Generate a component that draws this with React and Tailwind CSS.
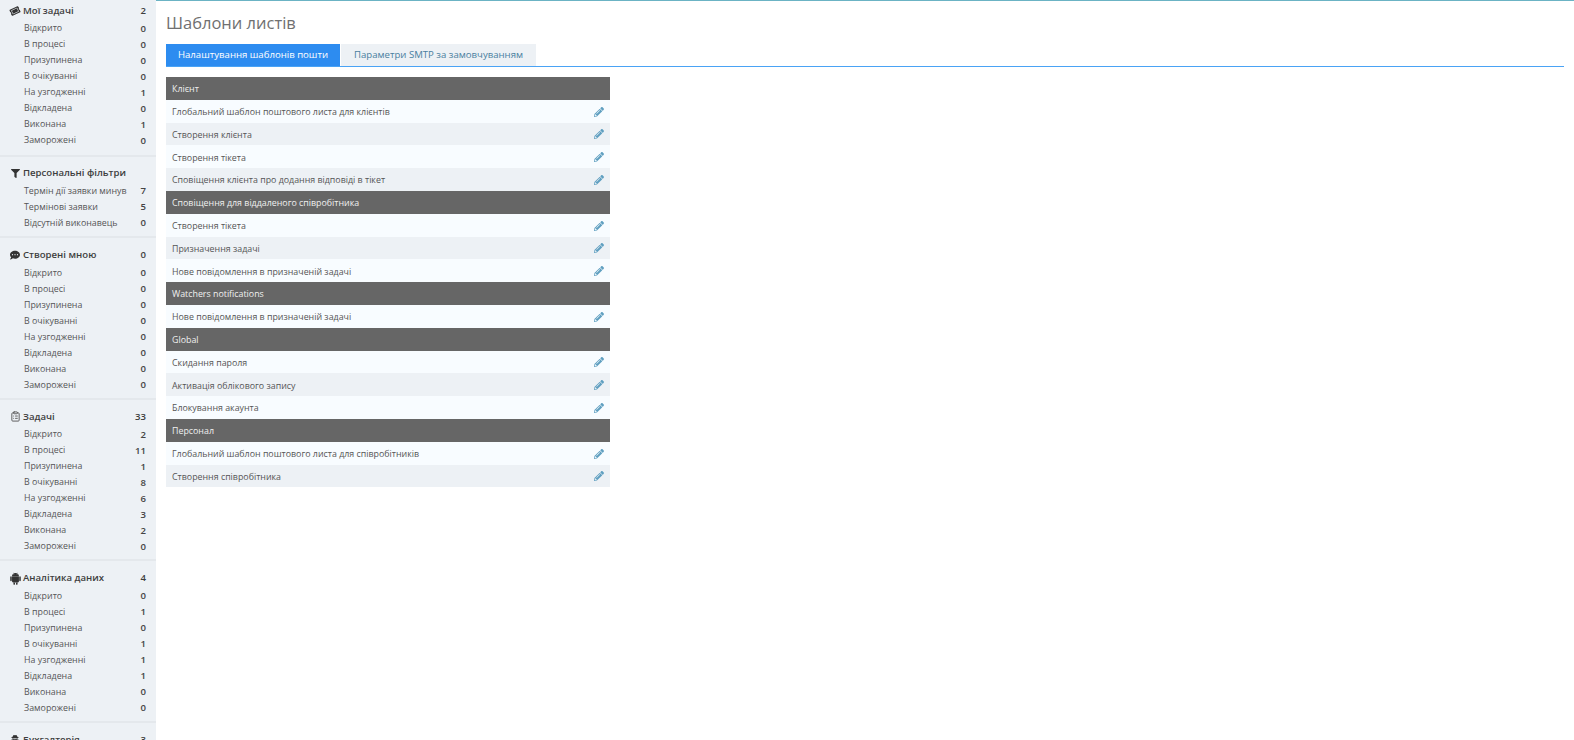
import { FaTicketAlt, FaFilter, FaCommentDots, FaUserSecret, FaPencilAlt } from "react-icons/fa";
import { DiAndroid } from "react-icons/di";
import { ClipboardList } from "lucide-react";

const statuses = ["Відкрито", "В процесі", "Призупинена", "В очікуванні", "На узгодженні", "Відкладена", "Виконана", "Заморожені"];

const withCounts = (counts) => statuses.map((name, i) => [name, counts[i]]);

const sections = [
  { icon: <FaTicketAlt className="text-[10px] -rotate-[25deg] text-[#333]" />, title: "Мої задачі", count: 2, items: withCounts([0, 0, 0, 0, 1, 0, 1, 0]) },
  {
    icon: <FaFilter className="text-[9px] text-[#333]" />,
    title: "Персональні фільтри",
    items: [
      ["Термін дії заявки минув", 7],
      ["Термінові заявки", 5],
      ["Відсутній виконавець", 0],
    ],
  },
  { icon: <FaCommentDots className="text-[10px] text-[#333]" />, title: "Створені мною", count: 0, items: withCounts([0, 0, 0, 0, 0, 0, 0, 0]) },
  { icon: <ClipboardList size={11} strokeWidth={2} className="text-[#555]" />, title: "Задачі", count: 33, items: withCounts([2, 11, 1, 8, 6, 3, 2, 0]) },
  { icon: <DiAndroid className="text-[13px] text-[#333]" />, title: "Аналітика даних", count: 4, items: withCounts([0, 1, 0, 1, 1, 1, 0, 0]) },
  { icon: <FaUserSecret className="text-[10px] text-[#333]" />, title: "Бухгалтерія", count: 3, items: [] },
];

const groups = [
  { title: "Клієнт", rows: ["Глобальний шаблон поштового листа для клієнтів", "Створення клієнта", "Створення тікета", "Сповіщення клієнта про додання відповіді в тікет"] },
  { title: "Сповіщення для віддаленого співробітника", rows: ["Створення тікета", "Призначення задачі", "Нове повідомлення в призначеній задачі"] },
  { title: "Watchers notifications", rows: ["Нове повідомлення в призначеній задачі"] },
  { title: "Global", rows: ["Скидання пароля", "Активація облікового запису", "Блокування акаунта"] },
  { title: "Персонал", rows: ["Глобальний шаблон поштового листа для співробітників", "Створення співробітника"] },
];

function Sidebar() {
  return (
    <aside className="w-[156px] h-[740px] shrink-0 overflow-hidden bg-[#edf1f5]">
      {sections.map(({ icon, title, count, items }, i) => (
        <div key={title} className={i === 0 ? "pt-[3px] pb-[5.6px] border-b-2 border-[#e4e8ec]" : "pt-[9px] pb-[4.6px] border-b-2 border-[#e4e8ec]"}>
          <div className="flex items-center h-4 pl-[7px] pr-[10px] text-[9.6px] font-semibold text-[#3e3e3e]">
            <span className="w-[16px] flex justify-center">{icon}</span>
            <span className="flex-1">{title}</span>
            <span>{count}</span>
          </div>
          <div className="mt-[2px]">
            {items.map(([name, n]) => (
              <div key={name} className="flex items-center justify-between h-4 pl-[24px] pr-[10px] text-[8.85px] text-[#555]">
                <span>{name}</span>
                <span className="text-[9.6px] font-semibold text-[#444]">{n}</span>
              </div>
            ))}
          </div>
        </div>
      ))}
    </aside>
  );
}

export default function App() {
  return (
    <div className="flex h-[740px] overflow-hidden bg-white font-['Open_Sans',sans-serif] text-[8.85px]">
      <Sidebar />
      <main className="flex-1 border-t border-[#6bb3c4] px-[10px]">
        <h1 className="pt-[12px] h-[43px] text-[16.5px] leading-[20px] text-[#707070]">Шаблони листів</h1>
        <div className="flex h-[23px] border-b-[1.5px] border-[#4aa3f5] text-[9.6px]">
          <div className="w-[174px] flex items-center justify-center bg-[#2d8cf0] text-white">Налаштування шаблонів пошти</div>
          <div className="ml-px w-[195px] flex items-center justify-center bg-[#edf1f5] text-[#4a7f9f]">Параметри SMTP за замовчуванням</div>
        </div>
        <div className="mt-[10px] w-[444px]">
          {groups.map((group) => (
            <div key={group.title}>
              <div className="flex items-center h-[22.8px] pt-px px-[6px] bg-[#666] text-[#f0f0f0]">
                <span className="pt-[2px]">{group.title}</span>
              </div>
              {group.rows.map((row) => (
                <div key={row} className="flex items-center justify-between h-[22.8px] pt-px px-[6px] bg-[#f8fcff] odd:bg-[#edf1f5] text-[#555]">
                  <span className="pt-[2px]">{row}</span>
                  <FaPencilAlt className="text-[10px] text-[#5f9fc0]" />
                </div>
              ))}
            </div>
          ))}
        </div>
      </main>
    </div>
  );
}
